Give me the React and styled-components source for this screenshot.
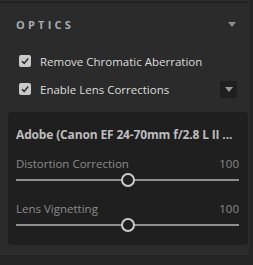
import React from 'react'
import styled, { createGlobalStyle } from 'styled-components'

const GlobalStyle = createGlobalStyle`
body {
  margin: 0;
  background: #252525;
  font-family: "Open Sans", "Noto Sans", sans-serif;
}
`

const Panel = styled.div`
width: 249px;
height: 255px;
background: #2b2b2b;
padding-top: 2px;
box-sizing: border-box;
`

const Rule = styled.div`
height: 1px;
background: #1c1c1c;
width: 248px;
`

const Header = styled.div`
display: flex;
justify-content: space-between;
align-items: center;
height: 22px;
margin-top: 10px;
padding: 0 13px 0 16px;
`

const Title = styled.div`
font-size: 11px;
font-weight: 700;
letter-spacing: 3.2px;
color: #a6adb4;
`

const Caret = styled.div`
width: 0;
height: 0;
border-left: 4px solid transparent;
border-right: 4px solid transparent;
border-top: 5px solid ${p => p.$color || '#8a8a8a'};
`

const Options = styled.div`
margin-top: 12px;
display: flex;
flex-direction: column;
`

const Row = styled.div`
display: flex;
align-items: center;
height: 28px;
padding: 0 12px 0 19px;
`

const Box = styled.div`
width: 12px;
height: 12px;
border-radius: 2px;
background: #c9c9c9;
display: flex;
align-items: center;
justify-content: center;
margin-right: 9px;
`

const Label = styled.div`
flex: 1;
font-size: 11.5px;
color: #dcdcdc;
`

const Drop = styled.div`
width: 17px;
height: 17px;
background: #1f1f1f;
display: flex;
align-items: center;
justify-content: center;
`

const Card = styled.div`
margin: 9px 1px 0 8px;
background: #1f1f1f;
border-radius: 4px;
height: 133px;
padding: 14px 9px 0 8px;
box-sizing: border-box;
`

const LensName = styled.div`
font-size: 12px;
font-weight: 700;
letter-spacing: -0.15px;
color: #bdbdbd;
white-space: nowrap;
height: 18px;
line-height: 18px;
`

const Setting = styled.div`
margin-top: ${p => p.$top}px;
`

const SettingHead = styled.div`
display: flex;
justify-content: space-between;
font-size: 11.5px;
color: #8b8b8b;
height: 16px;
line-height: 16px;
`

const Track = styled.div`
position: relative;
height: 16px;
display: flex;
align-items: center;
&::before {
  content: '';
  flex: 1;
  height: 2px;
  background: #8e8e8e;
}
`

const Thumb = styled.div`
position: absolute;
top: 1px;
width: 10px;
height: 10px;
border: 2px solid #cbcbcb;
border-radius: 50%;
background: #1f1f1f;
transform: translateX(-50%);
`

const Check = () => (
  <svg width="10" height="10" viewBox="0 0 10 10">
    <path d="M2 5.2 L4.2 7.4 L8.2 2.6" stroke="#2a2a2a" strokeWidth="1.5" fill="none" />
  </svg>
)

const Slider = ({ label, value, pos, top }) => (
  <Setting $top={top}>
    <SettingHead>
      <span>{label}</span>
      <span>{value}</span>
    </SettingHead>
    <Track>
      <Thumb style={{ left: pos + '%' }} />
    </Track>
  </Setting>
)

export default function App() {
  return (
    <>
      <GlobalStyle />
      <Panel>
        <Rule />
        <Header>
          <Title>OPTICS</Title>
          <Caret />
        </Header>
        <Options>
          <Row>
            <Box><Check /></Box>
            <Label>Remove Chromatic Aberration</Label>
          </Row>
          <Row>
            <Box><Check /></Box>
            <Label>Enable Lens Corrections</Label>
            <Drop><Caret $color="#9a9a9a" /></Drop>
          </Row>
        </Options>
        <Card>
          <LensName>Adobe (Canon EF 24-70mm f/2.8 L II ...</LensName>
          <Slider label="Distortion Correction" value="100" pos={50} top={12} />
          <Slider label="Lens Vignetting" value="100" pos={50} top={13} />
        </Card>
      </Panel>
    </>
  )
}
